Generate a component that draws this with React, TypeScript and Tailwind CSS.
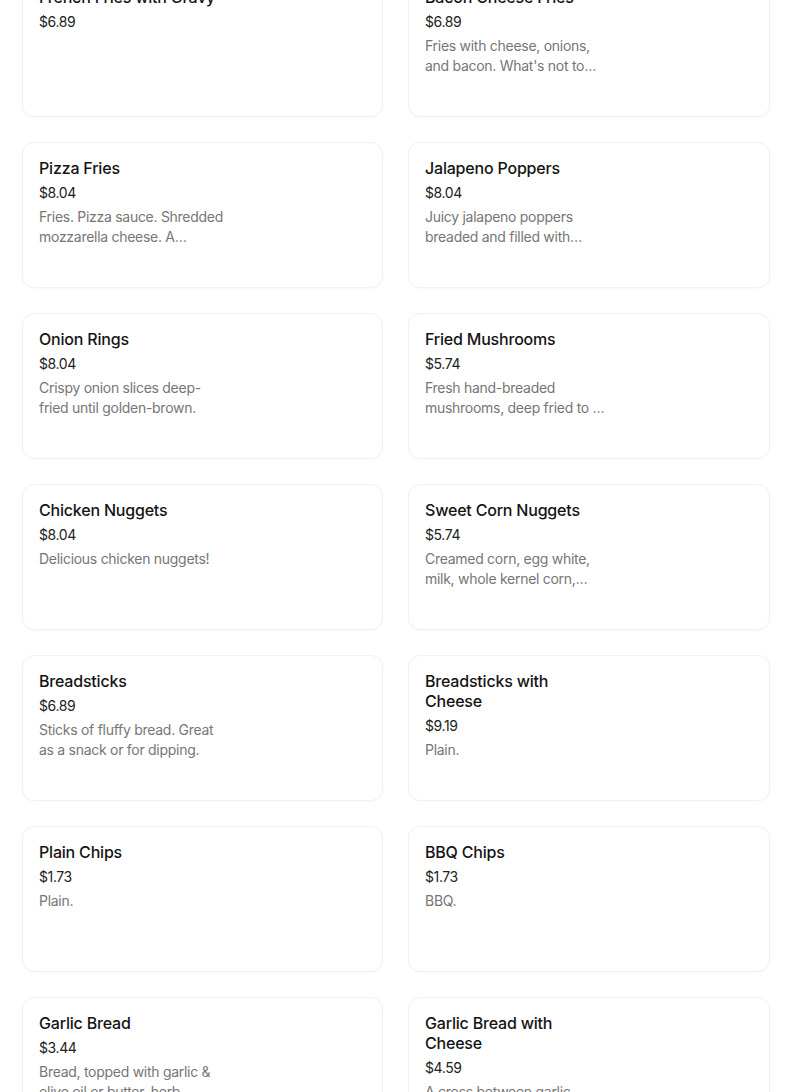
import React from "react";

type Item = { name: string; price: string; desc?: string };

const items: Item[] = [
  { name: "French Fries with Gravy", price: "$6.89" },
  { name: "Bacon Cheese Fries", price: "$6.89", desc: "Fries with cheese, onions, and bacon. What's not to…" },
  { name: "Pizza Fries", price: "$8.04", desc: "Fries. Pizza sauce. Shredded mozzarella cheese. A…" },
  { name: "Jalapeno Poppers", price: "$8.04", desc: "Juicy jalapeno poppers breaded and filled with…" },
  { name: "Onion Rings", price: "$8.04", desc: "Crispy onion slices deep-fried until golden-brown." },
  { name: "Fried Mushrooms", price: "$5.74", desc: "Fresh hand-breaded mushrooms, deep fried to …" },
  { name: "Chicken Nuggets", price: "$8.04", desc: "Delicious chicken nuggets!" },
  { name: "Sweet Corn Nuggets", price: "$5.74", desc: "Creamed corn, egg white, milk, whole kernel corn,…" },
  { name: "Breadsticks", price: "$6.89", desc: "Sticks of fluffy bread. Great as a snack or for dipping." },
  { name: "Breadsticks with Cheese", price: "$9.19", desc: "Plain." },
  { name: "Plain Chips", price: "$1.73", desc: "Plain." },
  { name: "BBQ Chips", price: "$1.73", desc: "BBQ." },
  { name: "Garlic Bread", price: "$3.44", desc: "Bread, topped with garlic & olive oil or butter, herb…" },
  { name: "Garlic Bread with Cheese", price: "$4.59", desc: "A cross between garlic bread…" },
];

function Card({ item }: { item: Item }) {
  return (
    <div className="h-[146px] rounded-xl border border-[#f1f1f1] bg-white px-4 pt-[15px] shadow-[0_1px_3px_rgba(0,0,0,0.025)]">
      <div className="w-[178px] text-[16px] font-medium leading-5 tracking-[-0.2px] text-[#141414]">
        {item.name}
      </div>
      <div className="mt-[5px] text-[14px] leading-5 tracking-[-0.4px] text-[#222]">{item.price}</div>
      {item.desc && (
        <div className="mt-1 line-clamp-2 w-[186px] text-[14px] leading-5 tracking-[-0.28px] text-[#767676]">
          {item.desc}
        </div>
      )}
    </div>
  );
}

export default function App() {
  return (
    <div
      className="min-h-[1092px] overflow-hidden bg-white"
      style={{ fontFamily: "Inter, 'Noto Sans', sans-serif" }}
    >
      <div className="mt-[-29px] grid grid-cols-[361px_362px] gap-[25px] pl-[22px]">
        {items.map((it) => (
          <Card key={it.name} item={it} />
        ))}
      </div>
    </div>
  );
}
